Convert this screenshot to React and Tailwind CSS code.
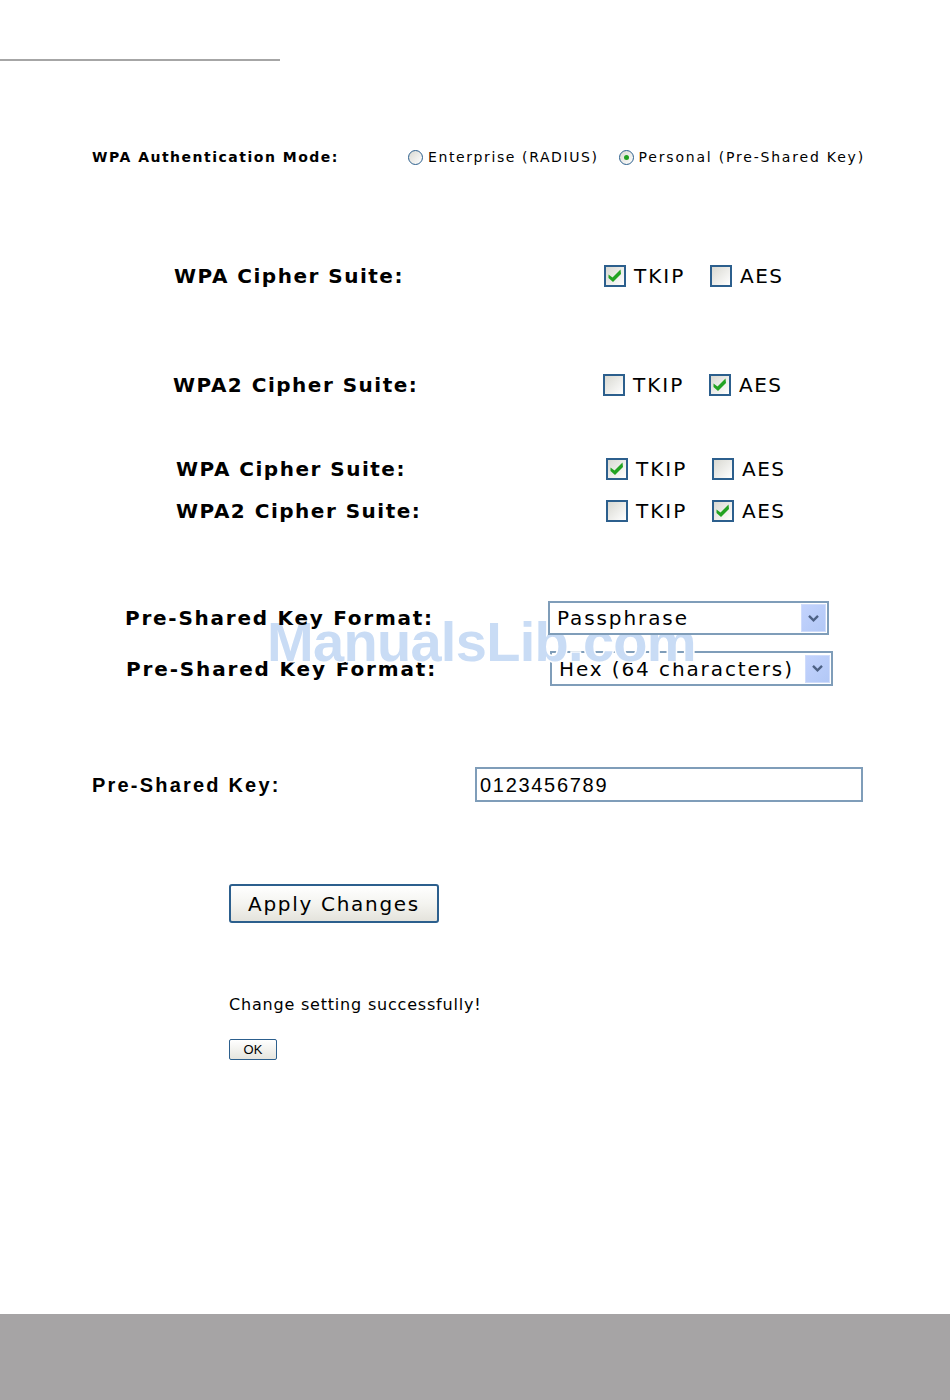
import React from "react";

const V = { fontFamily: '"DejaVu Sans", Verdana, sans-serif' };
const A = { fontFamily: '"Liberation Sans", Arial, sans-serif' };

function Check({ checked }) {
  return (
    <span className="relative inline-block w-[22px] h-[22px] border-2 border-[#2c5f8d] bg-gradient-to-br from-[#d9d9d2] to-white shrink-0">
      {checked && (
        <svg viewBox="0 0 18 18" className="absolute left-0 top-0 w-[18px] h-[18px]">
          <path d="M2.5 7.5 L6.5 10.5 L14.5 2.5 L15 7 L7 15 L2.5 11 Z" fill="#22a322" />
        </svg>
      )}
    </span>
  );
}

function Radio({ checked }) {
  return (
    <span className="relative flex items-center justify-center w-[15px] h-[15px] rounded-full border border-[#2c5f8d] bg-gradient-to-br from-[#d9d9d2] to-white shrink-0">
      {checked && <span className="w-[5px] h-[5px] rounded-full bg-[#21a121]" />}
    </span>
  );
}

function CipherRow({ label, tkip, aes, mt, labelLeft, boxLeft }) {
  return (
    <div className="flex items-center h-[30px]" style={{ marginTop: mt }}>
      <div className="shrink-0 font-bold text-[20px] tracking-[1.5px] text-black" style={{ ...V, paddingLeft: labelLeft, width: boxLeft }}>
        {label}
      </div>
      <div className="flex items-center">
        <Check checked={tkip} />
        <span className="ml-[8px] w-[76px] text-[20px] tracking-[2px] text-black" style={V}>TKIP</span>
        <Check checked={aes} />
        <span className="ml-[8px] text-[20px] tracking-[1.5px] text-black" style={V}>AES</span>
      </div>
    </div>
  );
}

function Select({ value, w }) {
  return (
    <div className="flex items-center h-full border-2 border-[#7f9db9] bg-white" style={{ width: w }}>
      <span className="flex-1 pl-[7px] text-[20px] tracking-[1.9px] text-black whitespace-nowrap" style={V}>{value}</span>
      <span className="mr-[1px] w-[25px] h-[28px] flex items-center justify-center bg-gradient-to-br from-[#c3d3fd] to-[#b2c8f6] border border-[#cfdcfb]">
        <svg viewBox="0 0 12 10" className="w-[11px] h-[9px]">
          <path d="M1 2 L6 7 L11 2" stroke="#4d6185" strokeWidth="2.6" fill="none" />
        </svg>
      </span>
    </div>
  );
}

export default function App() {
  return (
    <div className="relative w-[950px] h-[1400px] bg-white overflow-hidden">
      <div className="mt-[59px] h-[2px] w-[280px] bg-[#a6a6a6]" />

      <div className="mt-[84px] h-[24px] flex items-center">
        <div className="pl-[92px] w-[408px] shrink-0 font-bold text-[14px] tracking-[1.5px] text-black" style={V}>
          WPA Authentication Mode:
        </div>
        <Radio />
        <span className="ml-[5px] text-[14px] tracking-[1.6px] text-black" style={V}>Enterprise (RADIUS)</span>
        <span className="ml-[20px]"><Radio checked /></span>
        <span className="ml-[5px] text-[14px] tracking-[1.8px] text-black" style={V}>Personal (Pre-Shared Key)</span>
      </div>

      <CipherRow label="WPA Cipher Suite:" tkip aes={false} mt="92px" labelLeft="174px" boxLeft="604px" />
      <CipherRow label="WPA2 Cipher Suite:" tkip={false} aes mt="79px" labelLeft="173px" boxLeft="603px" />
      <CipherRow label="WPA Cipher Suite:" tkip aes={false} mt="54px" labelLeft="176px" boxLeft="606px" />
      <CipherRow label="WPA2 Cipher Suite:" tkip={false} aes mt="12px" labelLeft="176px" boxLeft="606px" />

      <div className="relative z-10 mt-[75px] h-[34px] flex items-center">
        <div className="pl-[125px] w-[548px] shrink-0 font-bold text-[20px] tracking-[1.75px] text-black" style={V}>Pre-Shared Key Format:</div>
        <Select value="Passphrase" w="281px" />
      </div>
      <div className="mt-[16px] h-[35px] flex items-center">
        <div className="pl-[126px] w-[550px] shrink-0 font-bold text-[20px] tracking-[1.85px] text-black" style={V}>Pre-Shared Key Format:</div>
        <Select value="Hex (64 characters)" w="283px" />
      </div>

      <div className="mt-[81px] h-[35px] flex items-center">
        <div className="pl-[92px] w-[475px] shrink-0 font-bold text-[20px] tracking-[2.2px] text-black" style={A}>Pre-Shared Key:</div>
        <div className="w-[388px] h-full border-2 border-[#7f9db9] bg-white flex items-center pl-[3px]">
          <span className="text-[20px] tracking-[1.7px] text-black" style={A}>0123456789</span>
        </div>
      </div>

      <div className="mt-[82px] pl-[229px] flex">
        <button className="w-[210px] h-[39px] rounded-[3px] border-2 border-[#2c5f8d] bg-gradient-to-b from-white via-[#f4f4f0] to-[#e4e3dc] text-[20px] tracking-[1.7px] text-black" style={V}>
          Apply Changes
        </button>
      </div>

      <div className="mt-[72px] h-[20px] pl-[229px] flex items-center text-[16px] tracking-[0.8px] text-black" style={V}>
        Change setting successfully!
      </div>

      <div className="mt-[24px] pl-[229px] flex">
        <button className="w-[48px] h-[21px] rounded-[2px] border border-[#2c5f8d] bg-gradient-to-b from-white to-[#e6e5de] text-[13px] text-black leading-none" style={A}>
          OK
        </button>
      </div>

      <div className="mt-[254px] h-[86px] w-full bg-[#a6a4a5]" />

      <div
        className="absolute left-[267px] top-[614px] text-[56px] font-bold text-[#c9dcf5] leading-none tracking-[-0.7px] [-webkit-text-stroke:3px_white] [paint-order:stroke_fill]"
        style={A}
      >
        ManualsLib.com
      </div>
    </div>
  );
}
